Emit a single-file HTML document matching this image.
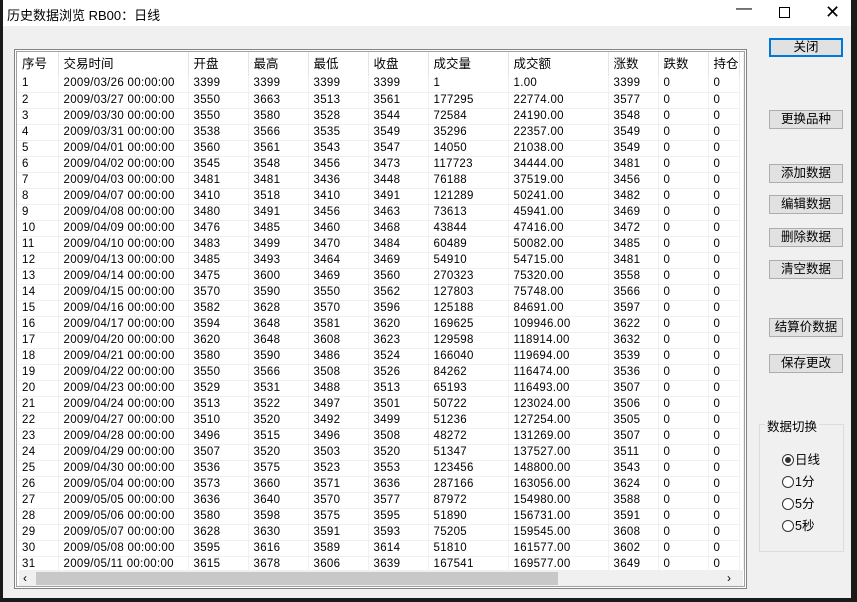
<!DOCTYPE html>
<html><head><meta charset="utf-8"><style>
*{margin:0;padding:0;box-sizing:border-box}
body{width:857px;height:602px;background:#1a1a1a;position:relative;overflow:hidden;font-family:"Liberation Sans","Noto Sans CJK SC",sans-serif;font-size:12px;color:#000}
.win{position:absolute;left:3px;top:0;width:848px;height:598px;background:#f0f0f0}
.title{position:absolute;left:0;top:0;width:848px;height:26px;background:#fff}
.title .t{position:absolute;left:4px;top:5px;font-size:13px}
.ctl{position:absolute;top:4px;font-size:16px}
.frame{position:absolute;left:11px;top:49px;width:733px;height:540px;border:1px solid #828282;background:#fff}
.inner{position:absolute;left:1px;top:1px;right:1px;bottom:1px;border:1px solid #a0a0a0;overflow:hidden}
table{position:absolute;left:0;top:0;border-collapse:collapse;table-layout:fixed}
td{height:16px;line-height:15px;padding:0 0 0 5px;border-right:1px solid #f0f0f0;border-bottom:1px solid #f0f0f0;white-space:nowrap;overflow:hidden;font-size:11.5px;letter-spacing:0.3px}
tr.h td{height:24px;line-height:24px;font-size:12.5px;border-right:1px solid #e5e5e5;border-bottom:none;letter-spacing:0}
.vs{position:absolute;left:726px;top:2px;width:17px;height:516px;background:#f0f0f0}
.hs{position:absolute;left:2px;top:518px;width:724px;height:17px;background:#f0f0f0}
.btn{position:absolute;left:766px;width:74px;height:19px;background:#e1e1e1;border:1px solid #adadad;text-align:center;line-height:17px;font-size:12.5px}
.grp{position:absolute;left:756px;top:424px;width:85px;height:128px;border:1px solid #dcdcdc}
.grp .lab{position:absolute;left:5px;top:-9px;background:#f0f0f0;padding:0 2px;font-size:12.5px}
.rad{position:absolute;left:22px;font-size:12.5px}
.rad i{display:inline-block;width:12px;height:12px;border:1px solid #333;border-radius:50%;background:#fff;vertical-align:-2px;margin-right:1px;position:relative}
.rad i b{position:absolute;left:2px;top:2px;width:6px;height:6px;border-radius:50%;background:#333}
</style></head><body>
<div class="win">
<div class="title"><span class="t">历史数据浏览 RB00：日线</span>
<span class="ctl" style="left:733px;top:0">—</span>
<span style="position:absolute;left:776px;top:7px;width:11px;height:11px;border:1px solid #000"></span>
<span class="ctl" style="left:822px;top:2px;font-size:18px">✕</span></div>
<div class="frame"><div class="inner">
<table>
<colgroup><col style="width:41px"><col style="width:130px"><col style="width:60px"><col style="width:60px"><col style="width:60px"><col style="width:60px"><col style="width:80px"><col style="width:100px"><col style="width:50px"><col style="width:50px"><col style="width:30px"></colgroup>
<tr class="h"><td>序号</td><td>交易时间</td><td>开盘</td><td>最高</td><td>最低</td><td>收盘</td><td>成交量</td><td>成交额</td><td>涨数</td><td>跌数</td><td>持仓</td></tr>
<tr><td>1</td><td>2009/03/26 00:00:00</td><td>3399</td><td>3399</td><td>3399</td><td>3399</td><td>1</td><td>1.00</td><td>3399</td><td>0</td><td>0</td></tr>
<tr><td>2</td><td>2009/03/27 00:00:00</td><td>3550</td><td>3663</td><td>3513</td><td>3561</td><td>177295</td><td>22774.00</td><td>3577</td><td>0</td><td>0</td></tr>
<tr><td>3</td><td>2009/03/30 00:00:00</td><td>3550</td><td>3580</td><td>3528</td><td>3544</td><td>72584</td><td>24190.00</td><td>3548</td><td>0</td><td>0</td></tr>
<tr><td>4</td><td>2009/03/31 00:00:00</td><td>3538</td><td>3566</td><td>3535</td><td>3549</td><td>35296</td><td>22357.00</td><td>3549</td><td>0</td><td>0</td></tr>
<tr><td>5</td><td>2009/04/01 00:00:00</td><td>3560</td><td>3561</td><td>3543</td><td>3547</td><td>14050</td><td>21038.00</td><td>3549</td><td>0</td><td>0</td></tr>
<tr><td>6</td><td>2009/04/02 00:00:00</td><td>3545</td><td>3548</td><td>3456</td><td>3473</td><td>117723</td><td>34444.00</td><td>3481</td><td>0</td><td>0</td></tr>
<tr><td>7</td><td>2009/04/03 00:00:00</td><td>3481</td><td>3481</td><td>3436</td><td>3448</td><td>76188</td><td>37519.00</td><td>3456</td><td>0</td><td>0</td></tr>
<tr><td>8</td><td>2009/04/07 00:00:00</td><td>3410</td><td>3518</td><td>3410</td><td>3491</td><td>121289</td><td>50241.00</td><td>3482</td><td>0</td><td>0</td></tr>
<tr><td>9</td><td>2009/04/08 00:00:00</td><td>3480</td><td>3491</td><td>3456</td><td>3463</td><td>73613</td><td>45941.00</td><td>3469</td><td>0</td><td>0</td></tr>
<tr><td>10</td><td>2009/04/09 00:00:00</td><td>3476</td><td>3485</td><td>3460</td><td>3468</td><td>43844</td><td>47416.00</td><td>3472</td><td>0</td><td>0</td></tr>
<tr><td>11</td><td>2009/04/10 00:00:00</td><td>3483</td><td>3499</td><td>3470</td><td>3484</td><td>60489</td><td>50082.00</td><td>3485</td><td>0</td><td>0</td></tr>
<tr><td>12</td><td>2009/04/13 00:00:00</td><td>3485</td><td>3493</td><td>3464</td><td>3469</td><td>54910</td><td>54715.00</td><td>3481</td><td>0</td><td>0</td></tr>
<tr><td>13</td><td>2009/04/14 00:00:00</td><td>3475</td><td>3600</td><td>3469</td><td>3560</td><td>270323</td><td>75320.00</td><td>3558</td><td>0</td><td>0</td></tr>
<tr><td>14</td><td>2009/04/15 00:00:00</td><td>3570</td><td>3590</td><td>3550</td><td>3562</td><td>127803</td><td>75748.00</td><td>3566</td><td>0</td><td>0</td></tr>
<tr><td>15</td><td>2009/04/16 00:00:00</td><td>3582</td><td>3628</td><td>3570</td><td>3596</td><td>125188</td><td>84691.00</td><td>3597</td><td>0</td><td>0</td></tr>
<tr><td>16</td><td>2009/04/17 00:00:00</td><td>3594</td><td>3648</td><td>3581</td><td>3620</td><td>169625</td><td>109946.00</td><td>3622</td><td>0</td><td>0</td></tr>
<tr><td>17</td><td>2009/04/20 00:00:00</td><td>3620</td><td>3648</td><td>3608</td><td>3623</td><td>129598</td><td>118914.00</td><td>3632</td><td>0</td><td>0</td></tr>
<tr><td>18</td><td>2009/04/21 00:00:00</td><td>3580</td><td>3590</td><td>3486</td><td>3524</td><td>166040</td><td>119694.00</td><td>3539</td><td>0</td><td>0</td></tr>
<tr><td>19</td><td>2009/04/22 00:00:00</td><td>3550</td><td>3566</td><td>3508</td><td>3526</td><td>84262</td><td>116474.00</td><td>3536</td><td>0</td><td>0</td></tr>
<tr><td>20</td><td>2009/04/23 00:00:00</td><td>3529</td><td>3531</td><td>3488</td><td>3513</td><td>65193</td><td>116493.00</td><td>3507</td><td>0</td><td>0</td></tr>
<tr><td>21</td><td>2009/04/24 00:00:00</td><td>3513</td><td>3522</td><td>3497</td><td>3501</td><td>50722</td><td>123024.00</td><td>3506</td><td>0</td><td>0</td></tr>
<tr><td>22</td><td>2009/04/27 00:00:00</td><td>3510</td><td>3520</td><td>3492</td><td>3499</td><td>51236</td><td>127254.00</td><td>3505</td><td>0</td><td>0</td></tr>
<tr><td>23</td><td>2009/04/28 00:00:00</td><td>3496</td><td>3515</td><td>3496</td><td>3508</td><td>48272</td><td>131269.00</td><td>3507</td><td>0</td><td>0</td></tr>
<tr><td>24</td><td>2009/04/29 00:00:00</td><td>3507</td><td>3520</td><td>3503</td><td>3520</td><td>51347</td><td>137527.00</td><td>3511</td><td>0</td><td>0</td></tr>
<tr><td>25</td><td>2009/04/30 00:00:00</td><td>3536</td><td>3575</td><td>3523</td><td>3553</td><td>123456</td><td>148800.00</td><td>3543</td><td>0</td><td>0</td></tr>
<tr><td>26</td><td>2009/05/04 00:00:00</td><td>3573</td><td>3660</td><td>3571</td><td>3636</td><td>287166</td><td>163056.00</td><td>3624</td><td>0</td><td>0</td></tr>
<tr><td>27</td><td>2009/05/05 00:00:00</td><td>3636</td><td>3640</td><td>3570</td><td>3577</td><td>87972</td><td>154980.00</td><td>3588</td><td>0</td><td>0</td></tr>
<tr><td>28</td><td>2009/05/06 00:00:00</td><td>3580</td><td>3598</td><td>3575</td><td>3595</td><td>51890</td><td>156731.00</td><td>3591</td><td>0</td><td>0</td></tr>
<tr><td>29</td><td>2009/05/07 00:00:00</td><td>3628</td><td>3630</td><td>3591</td><td>3593</td><td>75205</td><td>159545.00</td><td>3608</td><td>0</td><td>0</td></tr>
<tr><td>30</td><td>2009/05/08 00:00:00</td><td>3595</td><td>3616</td><td>3589</td><td>3614</td><td>51810</td><td>161577.00</td><td>3602</td><td>0</td><td>0</td></tr>
<tr><td>31</td><td>2009/05/11 00:00:00</td><td>3615</td><td>3678</td><td>3606</td><td>3639</td><td>167541</td><td>169577.00</td><td>3649</td><td>0</td><td>0</td></tr>
</table>
<div class="vs"><span style="position:absolute;left:4px;top:2px;font-size:10px">︿</span><div style="position:absolute;left:1px;top:17px;width:15px;height:18px;background:#a6a6a6"></div><span style="position:absolute;left:4px;top:500px;font-size:10px">﹀</span></div>
<div class="hs"><span style="position:absolute;left:4px;top:1px;font-size:12px">‹</span><div style="position:absolute;left:17px;top:2px;width:522px;height:13px;background:#c8c8c8"></div><span style="position:absolute;left:708px;top:1px;font-size:12px">›</span></div>
</div></div>
<div class="btn" style="top:38px;border:2px solid #0078d7;line-height:15px">关闭</div>
<div class="btn" style="top:110px">更换品种</div>
<div class="btn" style="top:164px">添加数据</div>
<div class="btn" style="top:195px">编辑数据</div>
<div class="btn" style="top:228px">删除数据</div>
<div class="btn" style="top:260px">清空数据</div>
<div class="btn" style="top:318px">结算价数据</div>
<div class="btn" style="top:354px">保存更改</div>
<div class="grp"><span class="lab">数据切换</span>
<div class="rad" style="top:24px"><i><b></b></i>日线</div>
<div class="rad" style="top:46px"><i></i>1分</div>
<div class="rad" style="top:68px"><i></i>5分</div>
<div class="rad" style="top:90px"><i></i>5秒</div>
</div>
</div>
</body></html>
